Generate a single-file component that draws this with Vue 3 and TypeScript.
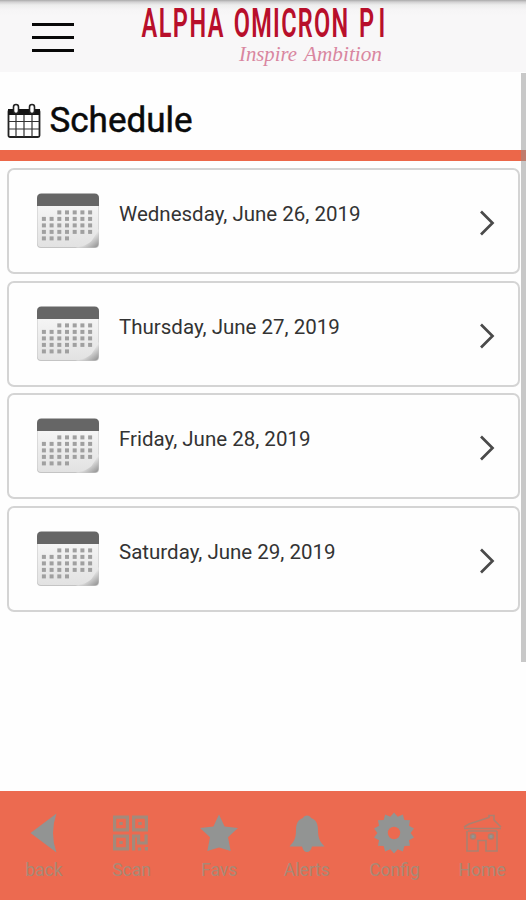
<script setup lang="ts">
interface NavItem {
  id: string
  label: string
}

const days: string[] = [
  'Wednesday, June 26, 2019',
  'Thursday, June 27, 2019',
  'Friday, June 28, 2019',
  'Saturday, June 29, 2019',
]

const nav: NavItem[] = [
  { id: 'back', label: 'back' },
  { id: 'scan', label: 'Scan' },
  { id: 'favs', label: 'Favs' },
  { id: 'alerts', label: 'Alerts' },
  { id: 'config', label: 'Config' },
  { id: 'home', label: 'Home' },
]

// Day squares of the small month sheet: the month starts on column 2 and ends on column 3.
const dots: { x: number; y: number }[] = []
for (let row = 0; row < 5; row++) {
  for (let col = 0; col < 7; col++) {
    if ((row === 0 && col < 2) || (row === 4 && col > 3)) continue
    dots.push({ x: 4.9 + col * 7.7, y: 17.4 + row * 6.5 })
  }
}

// Outline of a cog with 14 short teeth.
const cogPoints: string = Array.from({ length: 28 }, (_, i) => {
  const r = i % 2 === 0 ? 20.5 : 16.6
  const a = (i * Math.PI) / 14 - Math.PI / 2
  return `${(21 + r * Math.cos(a)).toFixed(2)},${(21 + r * Math.sin(a)).toFixed(2)}`
}).join(' ')
</script>

<template>
  <div class="screen">
    <header class="topbar">
      <button class="menu" aria-label="Menu">
        <span></span><span></span><span></span>
      </button>
      <svg class="logo" width="250" height="72" viewBox="0 0 250 72">
        <g class="brand" transform="scale(0.58 1)">
          <text x="1" y="37" textLength="141" lengthAdjust="spacing">ALPHA</text>
          <text x="160" y="37" textLength="197" lengthAdjust="spacing">OMICRON</text>
          <text x="376" y="37" textLength="45" lengthAdjust="spacing">PI</text>
        </g>
        <text class="motto" x="98" y="60.500" textLength="58" lengthAdjust="spacingAndGlyphs">Inspire</text>
        <text class="motto" x="163" y="60.500" textLength="78" lengthAdjust="spacingAndGlyphs">Ambition</text>
      </svg>
    </header>

    <main class="content">
      <div class="title">
        <svg width="34" height="36" viewBox="0 0 34 36">
          <rect x="1.500" y="7" width="31" height="27" rx="1.500" fill="#fff" stroke="#222" stroke-width="1.800" />
          <path d="M1 6h32v6H1z" fill="#151515" />
          <path d="M9 12v22M17 12v22M25 12v22M1.500 18.500h31M1.500 26h31" stroke="#333" stroke-width="1.200" />
          <rect x="6.500" y="1.500" width="5" height="9" rx="2.500" fill="#fff" stroke="#222" stroke-width="1.600" />
          <rect x="22.500" y="1.500" width="5" height="9" rx="2.500" fill="#fff" stroke="#222" stroke-width="1.600" />
        </svg>
        <h1>Schedule</h1>
      </div>
      <ul class="days">
        <li v-for="day in days" :key="day" class="card">
          <svg class="sheet" width="62" height="56" viewBox="0 0 62 56">
            <defs>
              <linearGradient id="paper" x1="0" y1="0" x2="0" y2="1">
                <stop offset="0" stop-color="#f5f5f5" />
                <stop offset="1" stop-color="#e2e2e2" />
              </linearGradient>
              <linearGradient id="curl" x1="0" y1="0" x2="1" y2="1">
                <stop offset="0.5" stop-color="#f2f2f2" />
                <stop offset="1" stop-color="#8c8c8c" />
              </linearGradient>
            </defs>
            <path d="M0 12h62v39q0 4-4 4H4q-4 0-4-4z" fill="#c4c4c4" />
            <path d="M.5 12h61v27q-1 14-20 15H4q-3.500 0-3.500-4z" fill="url(#paper)" />
            <path d="M61.500 36q-1 3-7 12-5 5-16 6.500H57q4.500 0 4.500-4.500z" fill="url(#curl)" />
            <path d="M0 13V5q0-4.500 4.500-4.500h53Q62 .5 62 5v8z" fill="#666" />
            <rect v-for="(dot, i) in dots" :key="i" :x="dot.x" :y="dot.y" width="4" height="4" fill="#a0a0a0" />
          </svg>
          <span class="date">{{ day }}</span>
          <svg class="chevron" width="18" height="28" viewBox="0 0 18 28">
            <path d="M3 2.500 14.500 14 3 25.500" fill="none" stroke="#4a4a4a" stroke-width="2.700" />
          </svg>
        </li>
      </ul>
      <div class="scrollbar"></div>
    </main>

    <nav class="tabs">
      <a v-for="item in nav" :key="item.id" class="tab">
        <svg width="42" height="42" viewBox="0 0 42 42">
          <path v-if="item.id === 'back'" d="M7.500 21 33.500 1.500q-7 19.500 0 39z" fill="#929493" />
          <g v-else-if="item.id === 'scan'" fill="none" stroke="#a28a7b" stroke-width="3.200">
            <path d="M4.600 5.100h12.800v12.800H4.600zM23.600 5.100h12.800v12.800H23.600zM4.600 24.100h12.800v12.800H4.600z" />
            <path d="M9.300 11.500h3.400M28.300 11.500h3.400M9.300 30.500h3.400" />
            <path d="M23.600 38.500V24h5v7h7.500v-8.500M29.500 38.500v-3M36.400 38.500V35" />
          </g>
          <path v-else-if="item.id === 'favs'" d="m21 2.500 5.600 12.100 13.400 1.500-10 9.100 2.700 13.800L21 35.500 9.300 39 12 25.200 2 16.100l13.400-1.500z" fill="#929493" />
          <path v-else-if="item.id === 'alerts'" d="M21 3.500c2 0 3.500 1 4 2.500 5 1.500 7 6 7 12 0 9 2.500 12 6.500 16.500H26q-1.500 5.500-5 5.500t-5-5.500H3.500C7.500 30 10 27 10 18c0-6 2-10.500 7-12 .5-1.500 2-2.500 4-2.500z" fill="#929493" />
          <g v-else-if="item.id === 'config'">
            <polygon :points="cogPoints" fill="#929493" />
            <circle cx="21" cy="21" r="6.200" fill="#ec6a50" />
          </g>
          <g v-else fill="none" stroke="#aa8170" stroke-width="1.600">
            <path d="M6 19v20h11V28.500h8V39h11V19M3 16.500h37M3 15 8 12 28 5.500v-2h5v4.500L40 15M7 19h29" />
            <circle cx="12" cy="24.500" r="2.500" fill="#929493" />
            <circle cx="30" cy="24.500" r="2.500" fill="#929493" />
          </g>
        </svg>
        <span>{{ item.label }}</span>
      </a>
    </nav>
  </div>
</template>

<style>
body {
  margin: 0;
  background: #fefefe;
}
</style>

<style scoped>
.screen {
  display: flex;
  flex-direction: column;
  width: 526px;
  height: 900px;
  overflow: hidden;
  background: #fefefe;
  font-family: Roboto, sans-serif;
}
.topbar {
  display: flex;
  flex: 0 0 72px;
  background: linear-gradient(#a9a9a9 0, #d2d1d2 2px, #ededed 5px, #f6f5f6 10px, #f8f7f8 16px);
}
.menu {
  display: flex;
  flex-direction: column;
  gap: 10px;
  width: 42px;
  margin: 23px 67px 0 32px;
  padding: 0;
  border: 0;
  background: none;
}
.menu span {
  height: 3px;
  background: #080808;
}
.brand text {
  font-size: 40.500px;
  font-weight: 600;
  fill: #b80f2b;
}
.motto {
  font-family: 'Liberation Serif', serif;
  font-size: 22px;
  font-style: italic;
  fill: #d986a0;
}
.content {
  position: relative;
  flex: 1;
}
.title {
  display: flex;
  align-items: center;
  gap: 8.500px;
  box-sizing: border-box;
  height: 89px;
  padding: 20px 0 0 7px;
  border-bottom: 11px solid #ec6749;
}
h1 {
  margin: 0;
  font-size: 35px;
  font-weight: 400;
  line-height: 40px;
  color: #0a0a0a;
  -webkit-text-stroke: 0.500px #0a0a0a;
}
.days {
  display: flex;
  flex-direction: column;
  gap: 6.500px;
  margin: 0;
  padding: 7px 6.500px 0 7px;
  list-style: none;
}
.card {
  display: flex;
  box-sizing: border-box;
  height: 106px;
  padding: 23px 22px 0 28px;
  border: 2.500px solid #d4d4d4;
  border-radius: 7px;
  background: #fefefe;
}
.date {
  flex: 1;
  margin: 7px 0 0 20px;
  font-size: 20.500px;
  line-height: 28px;
  color: #333;
}
.chevron {
  margin-top: 16px;
}
.scrollbar {
  position: absolute;
  top: 1px;
  right: 0;
  width: 5px;
  height: 589px;
  background: rgba(145, 145, 145, 0.5);
}
.tabs {
  display: grid;
  flex: 0 0 109px;
  grid-template-columns: repeat(6, 1fr);
  background: #ec6a50;
}
.tab {
  display: flex;
  flex-direction: column;
  align-items: center;
  padding-top: 21px;
}
.tab span {
  margin-top: 6px;
  font-size: 17.500px;
  line-height: 20px;
  color: #a88976;
}
</style>
